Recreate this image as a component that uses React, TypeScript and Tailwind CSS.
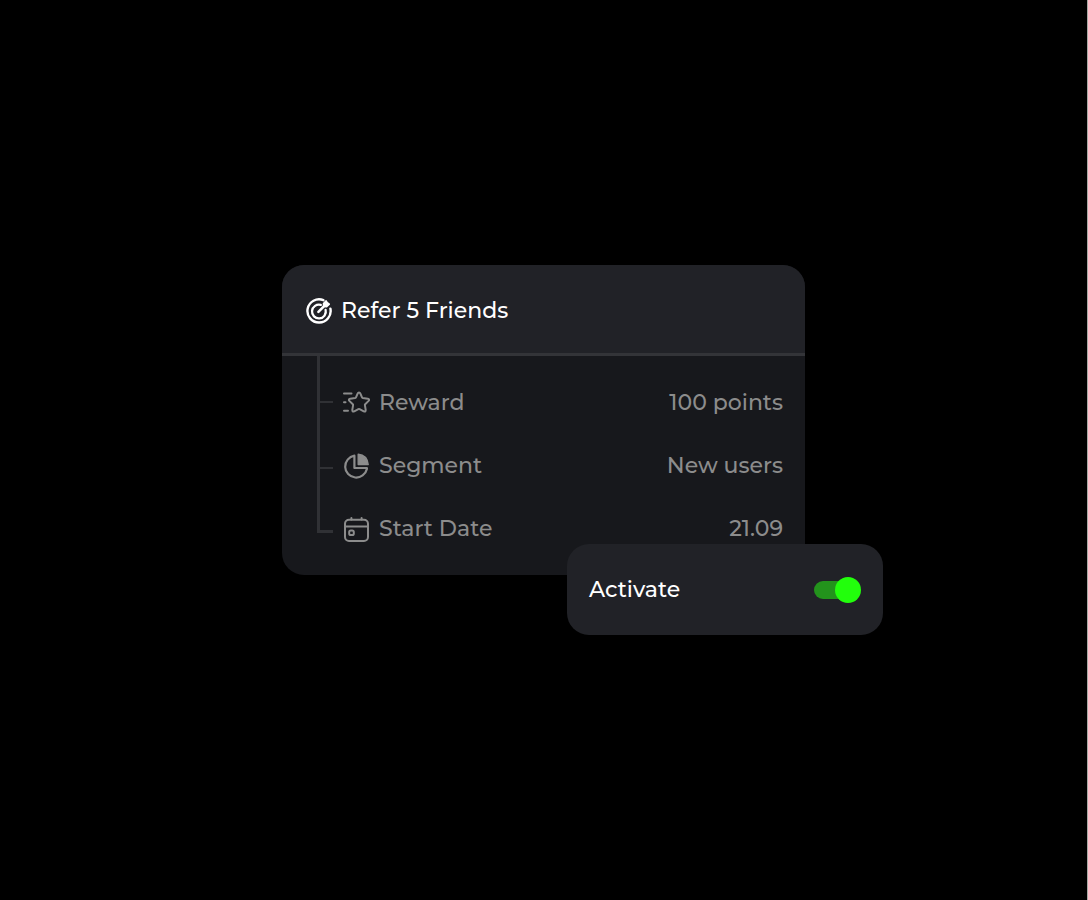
import { useState } from "react";

type Detail = {
  label: string;
  value: string;
  icon: React.ReactNode;
};

function TargetIcon() {
  return (
    <svg viewBox="0 0 28 28" className="size-7 shrink-0" fill="none" aria-hidden="true">
      <path
        d="M18.4 3.2A11.6 11.6 0 1 0 25.4 11.6"
        stroke="currentColor"
        strokeWidth="2.4"
        strokeLinecap="round"
      />
      <path
        d="M15.8 7.9A6.9 6.9 0 1 0 20.6 12.8"
        stroke="currentColor"
        strokeWidth="2.3"
        strokeLinecap="round"
      />
      <path d="M13.4 14.8L19.6 8.6" stroke="currentColor" strokeWidth="2.6" strokeLinecap="round" />
      <path
        d="M18.6 6.6L21 4L22.2 5.8L24.2 7.2L21.6 9.6L18.8 9.4Z"
        fill="currentColor"
        stroke="currentColor"
        strokeWidth="1.8"
        strokeLinejoin="round"
      />
    </svg>
  );
}

function RewardIcon() {
  return (
    <svg
      viewBox="0 0 28 28"
      className="size-7 shrink-0"
      fill="none"
      stroke="currentColor"
      strokeWidth="2"
      strokeLinecap="round"
      strokeLinejoin="round"
      aria-hidden="true"
    >
      <path d="M16 3.4Q16.9 3.4 17.4 4.6L19 8.4Q19.2 8.9 19.8 9L24.8 9.7Q27 10.2 25.6 11.9L22.2 15.2Q21.8 15.6 21.9 16.2L22.7 20.9Q22.8 23.2 20.8 22.3L16.6 20.1Q16 19.8 15.4 20.1L11.2 22.3Q9.2 23.2 9.3 20.9L10.1 16.2Q10.2 15.6 9.8 15.2L6.4 11.9Q5 10.2 7.2 9.7L12.2 9Q12.8 8.9 13 8.4L14.6 4.6Q15.1 3.4 16 3.4Z" />
      <path d="M1 4.4H8.5M1 13.2H2.5M1 21.8H5" />
    </svg>
  );
}

function SegmentIcon() {
  return (
    <svg viewBox="0 0 28 28" className="size-7 shrink-0" fill="none" aria-hidden="true">
      <path
        d="M11.4 3.7A11 11 0 1 0 23.9 17V16H11.4Z"
        stroke="currentColor"
        strokeWidth="2.2"
        strokeLinejoin="round"
      />
      <path
        d="M15.2 2.2Q24.2 3 25.2 12.6H15.2Z"
        fill="currentColor"
        stroke="currentColor"
        strokeWidth="1.4"
        strokeLinejoin="round"
      />
    </svg>
  );
}

function CalendarIcon() {
  return (
    <svg
      viewBox="0 0 28 28"
      className="size-7 shrink-0"
      fill="none"
      stroke="currentColor"
      strokeWidth="2"
      strokeLinecap="round"
      aria-hidden="true"
    >
      <rect x="2" y="4.8" width="23" height="21.2" rx="4" />
      <path d="M2 11.4H25M8.4 3V4.6M18.6 3V4.6" />
      <rect x="6.2" y="15.4" width="4.6" height="4.6" rx="1.6" />
    </svg>
  );
}

const details: Detail[] = [
  { label: "Reward", value: "100 points", icon: <RewardIcon /> },
  { label: "Segment", value: "New users", icon: <SegmentIcon /> },
  { label: "Start Date", value: "21.09", icon: <CalendarIcon /> },
];

export default function App() {
  const [active, setActive] = useState(true);

  return (
    <main className="flex min-h-screen items-center justify-center border-r border-[#a9aaa6] bg-black pb-[60px] font-['Montserrat','Inter',sans-serif] text-[22px] leading-7 font-medium text-white">
      <section className="relative w-full max-w-[523px]">
        <div className="overflow-hidden rounded-[22px] bg-[#17181c]">
          <header className="flex items-center gap-2 border-b-3 border-[#333438] bg-[#212227] px-[23px] pt-8 pb-7">
            <TargetIcon />
            <h1>Refer 5 Friends</h1>
          </header>

          <div className="flex gap-[10px] pr-[22px] pl-[35px] text-[#8c8c8c]">
            {/* branch lines */}
            <div className="flex w-4 shrink-0 flex-col" aria-hidden="true">
              <div className="h-[47px] border-b-2 border-l-3 border-[#303135]" />
              <div className="h-[66px] border-b-2 border-l-3 border-[#303135]" />
              <div className="h-16 border-b-3 border-l-3 border-[#303135]" />
            </div>

            <dl className="grow py-[15px]">
              {details.map((item) => (
                <div key={item.label} className="flex h-[63px] items-center justify-between">
                  <dt className="flex items-center gap-2">
                    {item.icon}
                    {item.label}
                  </dt>
                  <dd>{item.value}</dd>
                </div>
              ))}
            </dl>
          </div>
        </div>

        <label className="absolute -right-[78px] -bottom-[60px] flex w-[316px] cursor-pointer items-center justify-between rounded-[22px] bg-[#212227] px-[22px] pt-8 pb-[31px]">
          Activate
          <input
            type="checkbox"
            role="switch"
            checked={active}
            onChange={(e) => setActive(e.target.checked)}
            className="relative h-[26px] w-[47px] cursor-pointer appearance-none before:absolute before:top-1 before:left-0 before:h-[18px] before:w-9 before:rounded-full before:bg-[#4b4c50] after:absolute after:top-0 after:left-0 after:size-[26px] after:rounded-full after:bg-[#8c8c8c] checked:before:bg-[#23931c] checked:after:right-0 checked:after:left-auto checked:after:bg-[#22ff0c]"
          />
        </label>
      </section>
    </main>
  );
}
